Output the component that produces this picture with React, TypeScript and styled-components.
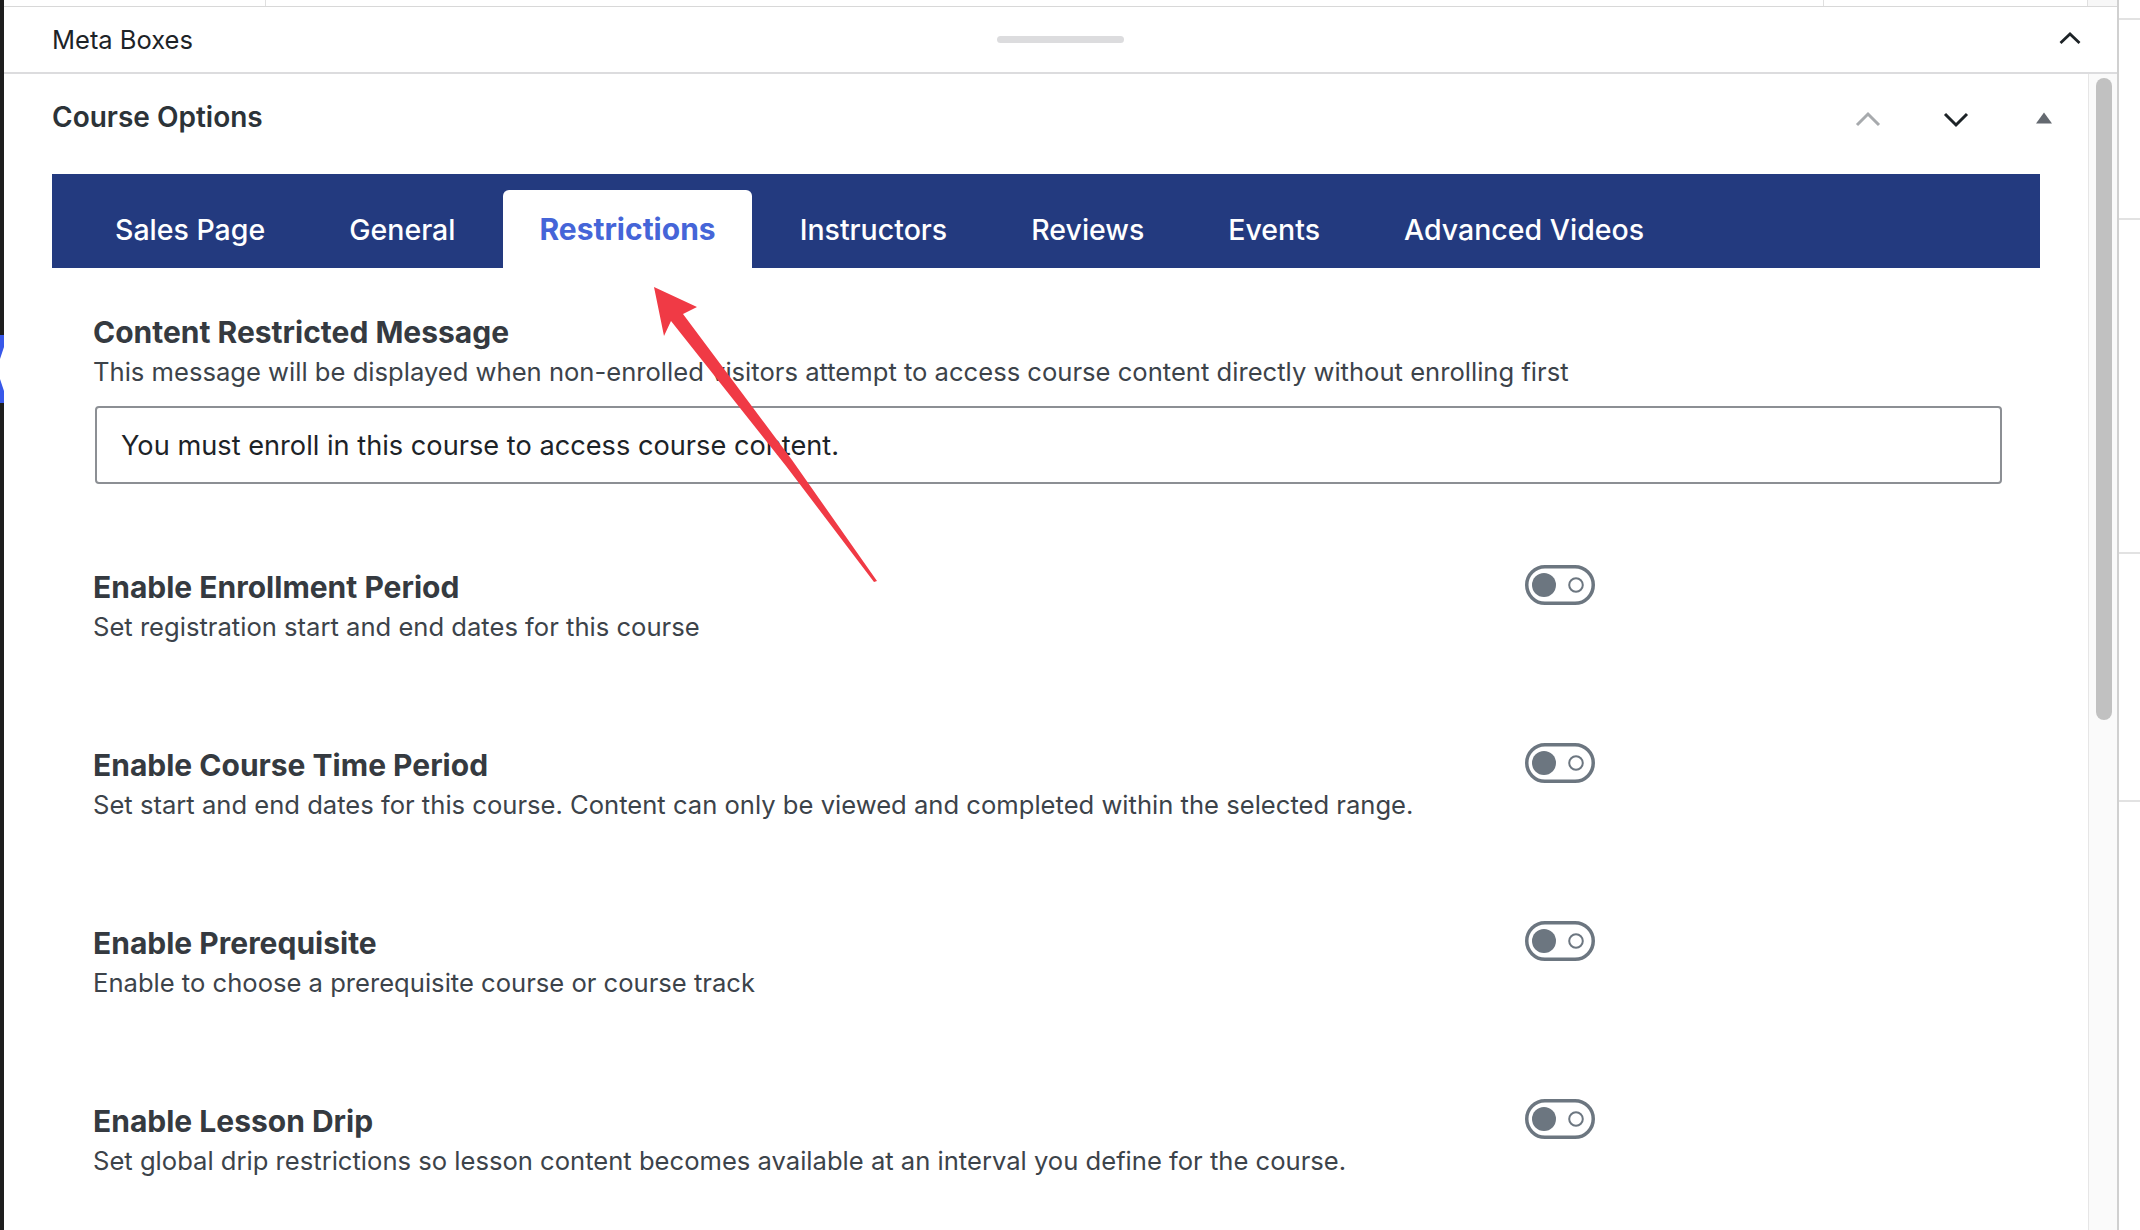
import React from "react";
import styled, { createGlobalStyle } from "styled-components";

const GlobalStyle = createGlobalStyle`
    html, body {
        margin: 0;
        padding: 0;
        background: #fff;
        overflow: hidden;
    }

    body {
        font-family: Inter, "Liberation Sans", Arial, sans-serif;
        -webkit-font-smoothing: antialiased;
    }

    * {
        box-sizing: border-box;
    }
`;

const Screen = styled.div`
    position: relative;
    display: flex;
    width: 2140px;
    height: 1230px;
    overflow: hidden;
    background: #fff;
`;

const AdminEdge = styled.div`
    flex: none;
    width: 4px;
    padding-top: 335px;
    background: #1e1e1e;

    svg {
        display: block;
    }
`;

const Frame = styled.div`
    flex: none;
    display: flex;
    flex-direction: column;
    width: 2115px;
    border-right: 2px solid #d0d0d0;
`;

const TopStrip = styled.div`
    flex: none;
    display: grid;
    grid-template-columns: 262px 1558px 264px 1fr;
    height: 7px;
    border-bottom: 1px solid #d8d8d8;

    div {
        border-right: 1px solid #e0e0e0;
    }

    div:last-child {
        border-right: none;
        background: #f7f7f7;
    }
`;

const MetaHeader = styled.div`
    flex: none;
    display: grid;
    grid-template-columns: 1fr auto 1fr;
    align-items: center;
    height: 67px;
    border-bottom: 2px solid #dcdcde;
`;

const MetaTitle = styled.div`
    padding-left: 48px;
    font-size: 25.5px;
    color: #1d2327;
`;

const DragHandle = styled.div`
    width: 127px;
    height: 7px;
    border-radius: 4px;
    background: #dcdcde;
`;

const CollapseButton = styled.div`
    justify-self: end;
    display: flex;
    align-items: center;
    justify-content: center;
    width: 94px;
    height: 100%;
    padding-bottom: 4px;
`;

const ScrollPanel = styled.div`
    flex: 1;
    display: flex;
    min-height: 0;
    overflow: hidden;
`;

const Content = styled.div`
    flex: 1;
    min-width: 0;
`;

const Track = styled.div`
    flex: none;
    width: 29px;
    padding: 4px 0 0 7px;
    background: #fafafa;
    border-left: 1px solid #e6e6e6;
`;

const Thumb = styled.div`
    width: 16px;
    height: 642px;
    border-radius: 8px;
    background: #c1c1c1;
`;

const OptionsHeader = styled.div`
    display: flex;
    align-items: center;
    justify-content: space-between;
    height: 86px;
    padding-left: 48px;
`;

const OptionsTitle = styled.h2`
    margin: 0;
    font-size: 28px;
    font-weight: 600;
    color: #2c3338;
`;

const Controls = styled.div`
    display: flex;
    padding-top: 4px;
`;

const IconButton = styled.div`
    display: flex;
    align-items: center;
    justify-content: center;
    width: 88px;
    height: 40px;

    svg {
        display: block;
    }
`;

const Tabs = styled.nav`
    display: flex;
    align-items: flex-end;
    gap: 12px;
    height: 94px;
    margin: 14px 48px 0;
    padding-left: 27px;
    background: #233a7f;
`;

const Tab = styled.div<{ $active?: boolean }>`
    display: flex;
    align-items: center;
    height: 78px;
    padding: 0 36px;
    border-radius: 6px 6px 0 0;
    font-size: ${(props): string => (props.$active ? "30px" : "28.5px")};
    font-weight: ${(props): number => (props.$active ? 700 : 500)};
    color: ${(props): string => (props.$active ? "#4565d8" : "#fff")};
    background: ${(props): string => (props.$active ? "#fff" : "transparent")};
    white-space: nowrap;
`;

const Body = styled.div`
    padding: 0 86px 0 89px;
`;

const MessageField = styled.div`
    margin-top: 46px;
`;

const FieldTitle = styled.div`
    font-size: 30px;
    line-height: 36px;
    font-weight: 700;
    color: #353a40;
`;

const FieldDesc = styled.div`
    margin-top: 5px;
    font-size: 25.6px;
    line-height: 34px;
    color: #3c434a;
    white-space: nowrap;
`;

const TextInput = styled.input`
    display: block;
    width: calc(100% - 2px);
    height: 78px;
    margin: 17px 0 0 2px;
    padding: 0 24px;
    border: 2px solid #8c8f94;
    border-radius: 4px;
    font-family: inherit;
    font-size: 27.2px;
    color: #1d2327;
    background: #fff;
    outline: none;
`;

const ToggleList = styled.div`
    display: flex;
    flex-direction: column;
    gap: 99px;
    margin-top: 81px;
`;

const ToggleRow = styled.div`
    display: grid;
    grid-template-columns: 75% 25%;
    align-items: start;
`;

const ToggleLabel = styled.div`
    padding-top: 4px;
`;

const RightStrip = styled.div`
    flex: 1;
    display: flex;
    flex-direction: column;
`;

const StripSegment = styled.div<{ $height: number }>`
    flex: none;
    height: ${(props): number => props.$height}px;
    border-bottom: 2px solid #e2e2e2;
`;

const Annotation = styled.svg`
    position: absolute;
    left: 640px;
    top: 280px;
    pointer-events: none;
`;

const Chevron: React.FC<{ up?: boolean; color: string; width?: number }> = ({ up, color, width = 3 }) => (
    <svg width="26" height="26" viewBox="0 0 26 26">
        <polyline
            points={up ? "2,19 13,8 24,19" : "2,8 13,19 24,8"}
            fill="none"
            stroke={color}
            strokeWidth={width}
        />
    </svg>
);

const Toggle: React.FC = () => (
    <svg width="70" height="40" viewBox="0 0 70 40">
        <rect x="1.75" y="1.75" width="66.5" height="36.5" rx="18.25" fill="none" stroke="#6c7680" strokeWidth="3.5" />
        <circle cx="19" cy="20" r="12" fill="#6c7680" />
        <circle cx="51" cy="20" r="6.8" fill="none" stroke="#6c7680" strokeWidth="2" />
    </svg>
);

const tabs = ["Sales Page", "General", "Restrictions", "Instructors", "Reviews", "Events", "Advanced Videos"];

const toggles = [
    { title: "Enable Enrollment Period", desc: "Set registration start and end dates for this course" },
    {
        title: "Enable Course Time Period",
        desc: "Set start and end dates for this course. Content can only be viewed and completed within the selected range."
    },
    { title: "Enable Prerequisite", desc: "Enable to choose a prerequisite course or course track" },
    {
        title: "Enable Lesson Drip",
        desc: "Set global drip restrictions so lesson content becomes available at an interval you define for the course."
    }
];

const App: React.FC = (): React.ReactElement => {
    return (
        <>
            <GlobalStyle />
            <Screen>
                <AdminEdge>
                    <svg width="4" height="68" viewBox="0 0 4 68">
                        <rect width="4" height="68" fill="#3858e9" />
                        <polygon points="4,12 0,24 0,44 4,56" fill="#fff" />
                    </svg>
                </AdminEdge>
                <Frame>
                    <TopStrip>
                        <div />
                        <div />
                        <div />
                        <div />
                    </TopStrip>
                    <MetaHeader>
                        <MetaTitle>Meta Boxes</MetaTitle>
                        <DragHandle />
                        <CollapseButton>
                            <svg width="22" height="14" viewBox="0 0 22 14">
                                <polyline points="1.5,12 11,3 20.5,12" fill="none" stroke="#1d2327" strokeWidth="2.8" />
                            </svg>
                        </CollapseButton>
                    </MetaHeader>
                    <ScrollPanel>
                        <Content>
                            <OptionsHeader>
                                <OptionsTitle>Course Options</OptionsTitle>
                                <Controls>
                                    <IconButton>
                                        <Chevron up color="#a7aaad" />
                                    </IconButton>
                                    <IconButton>
                                        <Chevron color="#1d2327" />
                                    </IconButton>
                                    <IconButton>
                                        <svg width="26" height="26" viewBox="0 0 26 26">
                                            <polygon points="5,17.5 13,6.5 21,17.5" fill="#646970" />
                                        </svg>
                                    </IconButton>
                                </Controls>
                            </OptionsHeader>
                            <Tabs>
                                {tabs.map((tab) => (
                                    <Tab key={tab} $active={tab === "Restrictions"}>
                                        {tab}
                                    </Tab>
                                ))}
                            </Tabs>
                            <Body>
                                <MessageField>
                                    <FieldTitle>Content Restricted Message</FieldTitle>
                                    <FieldDesc>
                                        This message will be displayed when non-enrolled visitors attempt to access
                                        course content directly without enrolling first
                                    </FieldDesc>
                                    <TextInput readOnly value="You must enroll in this course to access course content." />
                                </MessageField>
                                <ToggleList>
                                    {toggles.map((item) => (
                                        <ToggleRow key={item.title}>
                                            <ToggleLabel>
                                                <FieldTitle>{item.title}</FieldTitle>
                                                <FieldDesc>{item.desc}</FieldDesc>
                                            </ToggleLabel>
                                            <Toggle />
                                        </ToggleRow>
                                    ))}
                                </ToggleList>
                            </Body>
                        </Content>
                        <Track>
                            <Thumb />
                        </Track>
                    </ScrollPanel>
                </Frame>
                <RightStrip>
                    <StripSegment $height={20} />
                    <StripSegment $height={200} />
                    <StripSegment $height={334} />
                    <StripSegment $height={248} />
                </RightStrip>
                <Annotation width="250" height="310" viewBox="0 0 250 310">
                    <polygon
                        points="14,7 57,27 43,34 152,180 237,301 234,302 146,186 31,41 24,56"
                        fill="#f03a45"
                    />
                </Annotation>
            </Screen>
        </>
    );
};

export default App;
